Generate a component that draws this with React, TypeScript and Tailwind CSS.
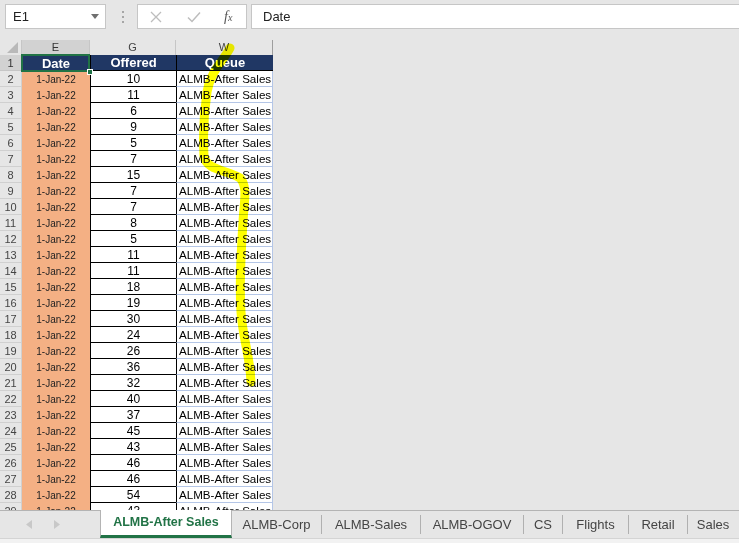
import React from "react";

const offered = [10, 11, 6, 9, 5, 7, 15, 7, 7, 8, 5, 11, 11, 18, 19, 30, 24, 26, 36, 32, 40, 37, 45, 43, 46, 46, 54, 43];

const tabs: { name: string; w: string }[] = [
  { name: "ALMB-Corp", w: "w-[89px]" },
  { name: "ALMB-Sales", w: "w-[98px]" },
  { name: "ALMB-OGOV", w: "w-[102px]" },
  { name: "CS", w: "w-[38px]" },
  { name: "Flights", w: "w-[65px]" },
  { name: "Retail", w: "w-[58px]" },
  { name: "Sales", w: "w-[50px]" },
];

function Sep() {
  return <div className="w-px h-[19px] bg-[#b0b0b0] self-center shrink-0" />;
}

export default function App() {
  return (
    <div className="relative w-[739px] h-[543px] overflow-hidden bg-[#e6e6e6] flex flex-col font-['Liberation_Sans',Arial,sans-serif] text-black">
      {/* Formula bar */}
      <div className="h-[40px] shrink-0 flex items-start pt-[4px] pl-[5px]">
        <div className="w-[101px] h-[25px] bg-white border border-[#c6c6c6] flex items-center justify-between pl-[7px] pr-[6px] text-[13px] text-[#222]">
          <span>E1</span>
          <svg width="8" height="5" viewBox="0 0 8 5">
            <path d="M0 0 L8 0 L4 5 Z" fill="#6f6f6f" />
          </svg>
        </div>
        <div className="ml-[15px] w-[3px] h-[25px] flex flex-col items-center justify-center gap-[3px]">
          <div className="w-[2px] h-[2px] bg-[#a6a6a6]" />
          <div className="w-[2px] h-[2px] bg-[#a6a6a6]" />
          <div className="w-[2px] h-[2px] bg-[#a6a6a6]" />
        </div>
        <div className="ml-[13px] w-[110px] h-[25px] bg-white border border-[#c6c6c6] flex items-center">
          <svg className="ml-[12px]" width="12" height="12" viewBox="0 0 12 12">
            <path d="M1 1 L11 11 M11 1 L1 11" stroke="#bdbdbd" strokeWidth="1.3" fill="none" />
          </svg>
          <svg className="ml-[25px]" width="14" height="12" viewBox="0 0 14 12">
            <path d="M1 6.5 L5 10.5 L13 1.5" stroke="#bdbdbd" strokeWidth="1.5" fill="none" />
          </svg>
          <span className="ml-[23px] font-['Liberation_Serif',serif] italic text-[14px] text-[#555] leading-none">
            f<span className="text-[10px]">x</span>
          </span>
        </div>
        <div className="ml-[4px] flex-1 h-[25px] bg-white border border-r-0 border-[#c6c6c6] flex items-center pl-[11px] text-[13px] text-[#222]">
          Date
        </div>
      </div>

      {/* Sheet */}
      <div className="flex-1 relative overflow-hidden">
        {/* column headers */}
        <div className="h-[15px] flex">
          <div className="w-[22px] h-[15px] border-r border-[#c6c6c6] flex items-end justify-end pr-[3px] pb-[2px]">
            <svg width="11" height="11" viewBox="0 0 11 11">
              <path d="M11 0 L11 11 L0 11 Z" fill="#b9b9b9" />
            </svg>
          </div>
          <div className="w-[68px] h-[15px] bg-[#d2d2d2] border-r border-[#c6c6c6] flex items-center justify-center text-[11px] text-[#333]">E</div>
          <div className="w-[86px] h-[15px] border-r border-[#c6c6c6] flex items-center justify-center text-[11px] text-[#444]">G</div>
          <div className="w-[97px] h-[15px] border-r border-[#9e9e9e] flex items-center justify-center text-[11px] text-[#444]">W</div>
        </div>

        {/* header row 1 */}
        <div className="h-[16px] flex">
          <div className="w-[22px] h-[16px] bg-[#d2d2d2] border-r border-b border-[#c6c6c6] flex items-center justify-center pt-px text-[11px] text-[#333]">1</div>
          <div className="relative w-[68px] h-[16px] bg-[#203764] flex items-center justify-center pt-px text-white font-bold text-[13px]">
            Date
            <div className="absolute -left-[1px] -top-[1px] w-[69px] h-[18px] border-2 border-[#217346]" />
            <div className="absolute -right-[3px] -bottom-[4px] w-[6px] h-[6px] bg-[#217346] border border-white z-10" />
          </div>
          <div className="w-[86px] h-[16px] bg-[#203764] border-l border-b border-black flex items-center justify-center pt-px text-white font-bold text-[13px]">Offered</div>
          <div className="w-[97px] h-[16px] bg-[#203764] border-l border-b border-black flex items-center justify-center pt-px text-white font-bold text-[13px]">Queue</div>
        </div>

        {offered.map((v, i) => (
          <div key={i} className="h-[16px] flex">
            <div className="w-[22px] h-[16px] border-r border-b border-[#d0d0d0] flex items-center justify-center pt-px text-[11px] text-[#444]">{i + 2}</div>
            <div className="w-[68px] h-[16px] bg-[#f4b084] flex items-center justify-center pt-px text-[10px] text-[#222]">1-Jan-22</div>
            <div className="w-[86px] h-[16px] bg-white border-l border-b border-black flex items-center justify-center pt-px text-[12px]">{v}</div>
            <div className="w-[97px] h-[16px] bg-white border-l border-black border-b border-b-[#b4c6e7] border-r border-r-[#b4c6e7] flex items-center pl-[2px] pt-px text-[11.6px] whitespace-nowrap overflow-hidden">ALMB-After Sales</div>
          </div>
        ))}
      </div>

      {/* Tab bar */}
      <div className="h-[28px] shrink-0 flex border-t border-[#b4b4b4]">
        <div className="w-[100px] flex items-center">
          <svg className="ml-[26px]" width="6" height="9" viewBox="0 0 6 9">
            <path d="M6 0 L6 9 L0 4.5 Z" fill="#c8c8c8" />
          </svg>
          <svg className="ml-[22px]" width="6" height="9" viewBox="0 0 6 9">
            <path d="M0 0 L0 9 L6 4.5 Z" fill="#c8c8c8" />
          </svg>
        </div>
        <div className="w-[132px] -mt-px bg-white border-x border-[#b4b4b4] border-b-[3px] border-b-[#217346] flex items-center justify-center text-[12.5px] font-bold text-[#217346]">
          ALMB-After Sales
        </div>
        {tabs.map((t, i) => (
          <React.Fragment key={t.name}>
            {i > 0 && <Sep />}
            <div className={`${t.w} shrink-0 flex items-center justify-center text-[13px] text-[#444] whitespace-nowrap`}>{t.name}</div>
          </React.Fragment>
        ))}
      </div>
      <div className="h-[5px] shrink-0 bg-[#f2f2f2] border-t border-[#d4d4d4]" />

      {/* Highlighter stroke */}
      <svg className="absolute left-0 top-0 pointer-events-none mix-blend-multiply" width="739" height="543" viewBox="0 0 739 543">
        <path
          d="M230 48 C 224 60, 210 72, 207 92 C 204 112, 203 138, 204 156 C 206 170, 226 170, 240 178 C 248 186, 244 202, 243 222 C 241 252, 239 282, 241 312 C 243 340, 250 356, 251 382"
          stroke="#ffff00"
          strokeWidth="9"
          strokeLinecap="round"
          strokeLinejoin="round"
          fill="none"
        />
      </svg>
    </div>
  );
}
